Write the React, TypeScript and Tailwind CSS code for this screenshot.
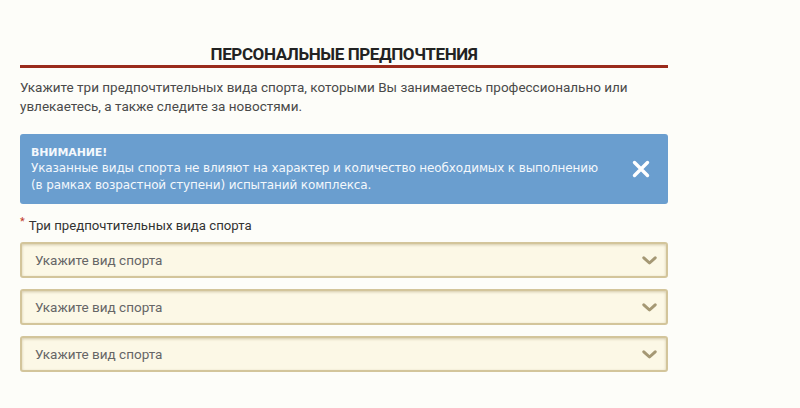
import React from "react";

function Chevron() {
  return (
    <svg width="15" height="9" viewBox="0 0 15 9" className="shrink-0">
      <path d="M1.8 1.8 L7.5 7 L13.2 1.8" fill="none" stroke="#a59874" strokeWidth="3" strokeLinecap="round" strokeLinejoin="round" />
    </svg>
  );
}

function SelectBox() {
  return (
    <div className="h-[36px] w-full rounded-[3px] border-2 border-[#d3c59b] bg-[#fcf8e6] shadow-[inset_0_1px_3px_rgba(150,130,80,0.4)] flex items-center justify-between pl-[13px] pr-[9px]">
      <span className="text-[13.5px] text-[#666]">Укажите вид спорта</span>
      <Chevron />
    </div>
  );
}

export default function App() {
  return (
    <div className="w-[800px] h-[408px] bg-[#fdfdf9] overflow-hidden" style={{ fontFamily: 'Roboto, "Open Sans", sans-serif' }}>
      <div className="ml-[20px] w-[648px] pt-[44px]">
        <h2 className="text-center text-[17px] leading-[20px] font-bold tracking-[-0.4px] text-[#222] pb-[1px] border-b-[3px] border-[#9a2b1c]">
          ПЕРСОНАЛЬНЫЕ ПРЕДПОЧТЕНИЯ
        </h2>
        <p className="mt-[10px] text-[13.5px] leading-[19px] text-[#4a4a4a]">
          Укажите три предпочтительных вида спорта, которыми Вы занимаетесь профессионально или увлекаетесь, а также следите за новостями.
        </p>
        <div className="mt-[18px] h-[70px] rounded-[3px] bg-[#6a9ecf] flex items-center justify-between pl-[11px] pr-[18px]" style={{ fontFamily: '"DejaVu Sans", Verdana, sans-serif' }}>
          <div className="text-[#f4f8fc] tracking-[-0.12px]">
            <div className="text-[11px] leading-[15px] font-bold">ВНИМАНИЕ!</div>
            <div className="text-[12px] leading-[17px]">
              Указанные виды спорта не влияют на характер и количество необходимых к выполнению
              <br />
              (в рамках возрастной ступени) испытаний комплекса.
            </div>
          </div>
          <svg width="18" height="18" viewBox="0 0 18 18" className="shrink-0">
            <path d="M2.5 2.5 L15.5 15.5 M15.5 2.5 L2.5 15.5" stroke="#ffffff" strokeWidth="3.4" strokeLinecap="round" />
          </svg>
        </div>
        <div className="mt-[13px] text-[13.2px] leading-[17px] text-[#333] flex items-start">
          <span className="text-[#c0392b] text-[11px] leading-[10px] mr-[4px]">*</span>
          <span>Три предпочтительных вида спорта</span>
        </div>
        <div className="mt-[8px] flex flex-col gap-[11px]">
          <SelectBox />
          <SelectBox />
          <SelectBox />
        </div>
      </div>
    </div>
  );
}
